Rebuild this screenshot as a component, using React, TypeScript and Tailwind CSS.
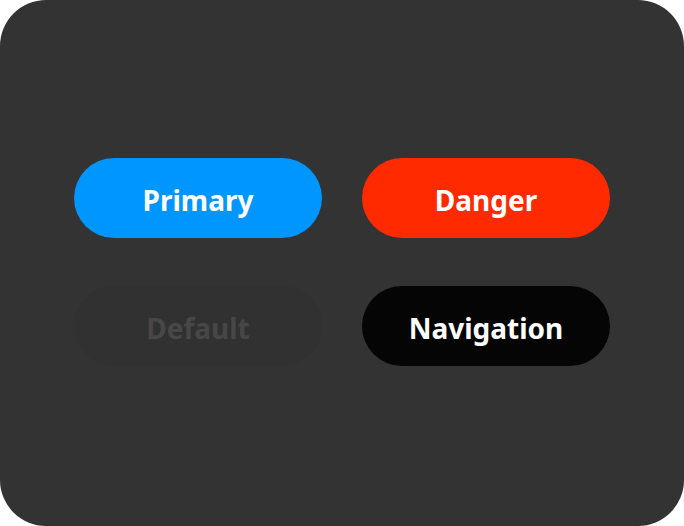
import React from 'react';

const buttons = [
  { label: 'Primary', className: 'bg-[#0096ff] text-white' },
  { label: 'Danger', className: 'bg-[#ff2a00] text-white' },
  { label: 'Default', className: 'bg-[#313131] text-[#474747]' },
  { label: 'Navigation', className: 'bg-[#050505] text-white' },
];

const App: React.FC = () => {
  return (
    <div className="w-[684px] h-[526px] bg-white">
      <div className="w-full h-full bg-[#333333] rounded-[46px] flex items-center justify-center pb-[2px]">
        <div className="grid grid-cols-2 gap-x-10 gap-y-12">
          {buttons.map((b) => (
            <button
              key={b.label}
              className={`w-[248px] h-[80px] rounded-full flex items-center justify-center pt-[3px] text-[28px] font-bold ${b.className}`}
              style={{ fontFamily: '"Noto Sans", sans-serif' }}
            >
              {b.label}
            </button>
          ))}
        </div>
      </div>
    </div>
  );
};

export default App;
